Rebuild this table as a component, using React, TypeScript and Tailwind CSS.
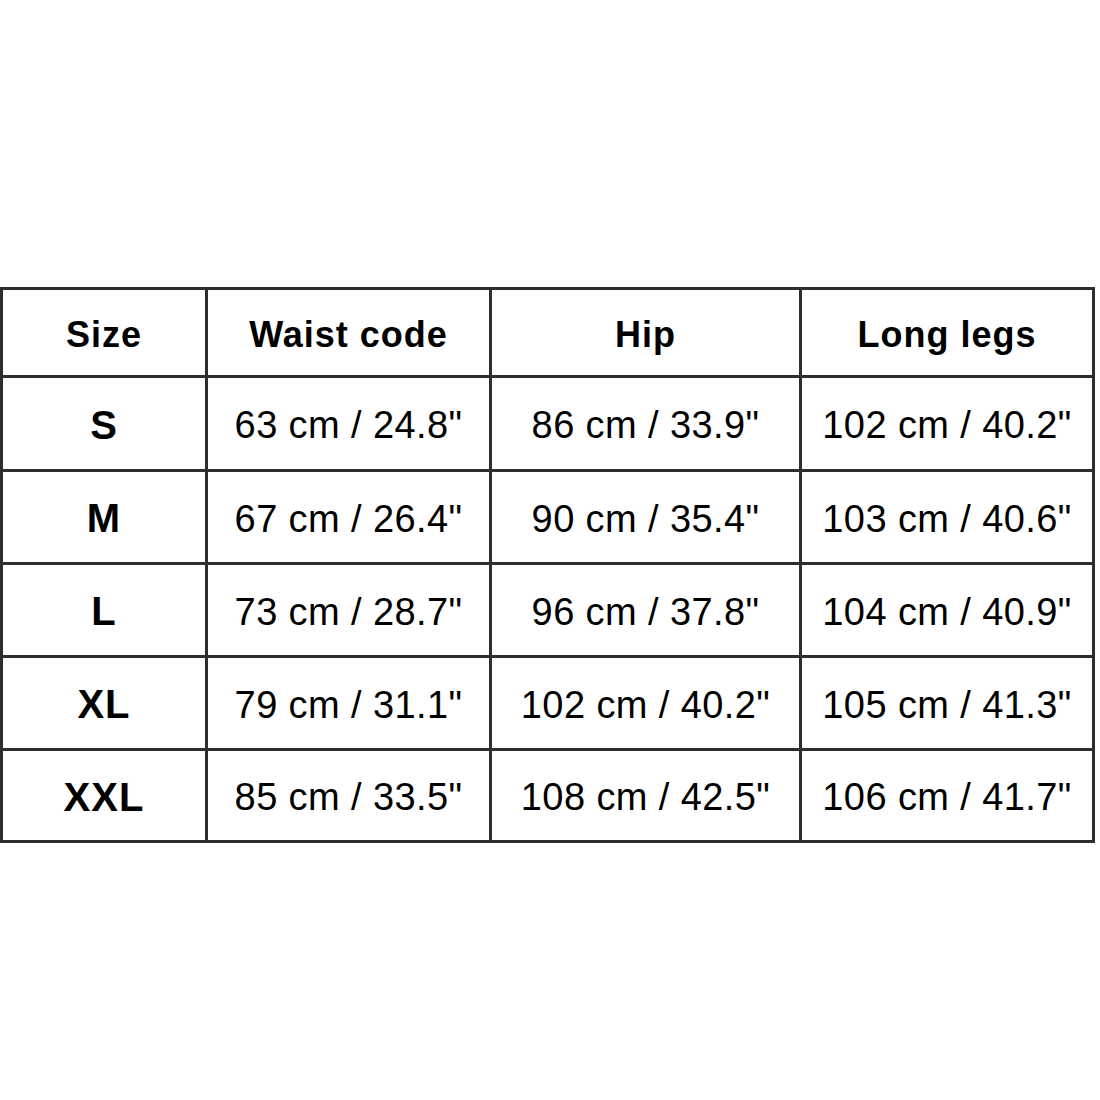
import React from 'react';

const rows = [
    { size: 'S', waist: '63 cm / 24.8"', hip: '86 cm / 33.9"', legs: '102 cm / 40.2"' },
    { size: 'M', waist: '67 cm / 26.4"', hip: '90 cm / 35.4"', legs: '103 cm / 40.6"' },
    { size: 'L', waist: '73 cm / 28.7"', hip: '96 cm / 37.8"', legs: '104 cm / 40.9"' },
    { size: 'XL', waist: '79 cm / 31.1"', hip: '102 cm / 40.2"', legs: '105 cm / 41.3"' },
    { size: 'XXL', waist: '85 cm / 33.5"', hip: '108 cm / 42.5"', legs: '106 cm / 41.7"' },
];

const headers = ['Size', 'Waist code', 'Hip', 'Long legs'];

const App: React.FC = () => {
    return (
        <div className="w-[1100px] h-[1100px] bg-white pt-[287px]" style={{ fontFamily: '"Liberation Sans", Arial, sans-serif' }}>
            <div className="w-[1095px] grid grid-cols-[202px_281px_307px_290px] grid-rows-[85px_91px_90px_90px_90px_89px] gap-[3px] p-[3px] bg-[#2e2e2e] text-black">
                {headers.map((h) => (
                    <div key={h} className="bg-white flex items-center justify-center text-[36px] font-bold tracking-[1px] pt-[4px]">
                        {h}
                    </div>
                ))}
                {rows.map((r) => (
                    <React.Fragment key={r.size}>
                        <div className="bg-white flex items-center justify-center text-[40px] font-bold tracking-[1px] pt-[2px]">
                            {r.size}
                        </div>
                        <div className="bg-white flex items-center justify-center text-[38px] tracking-[0.4px] pt-[4px]">
                            {r.waist}
                        </div>
                        <div className="bg-white flex items-center justify-center text-[38px] tracking-[0.4px] pt-[4px]">
                            {r.hip}
                        </div>
                        <div className="bg-white flex items-center justify-center text-[38px] tracking-[0.4px] pt-[4px]">
                            {r.legs}
                        </div>
                    </React.Fragment>
                ))}
            </div>
        </div>
    );
};

export default App;
